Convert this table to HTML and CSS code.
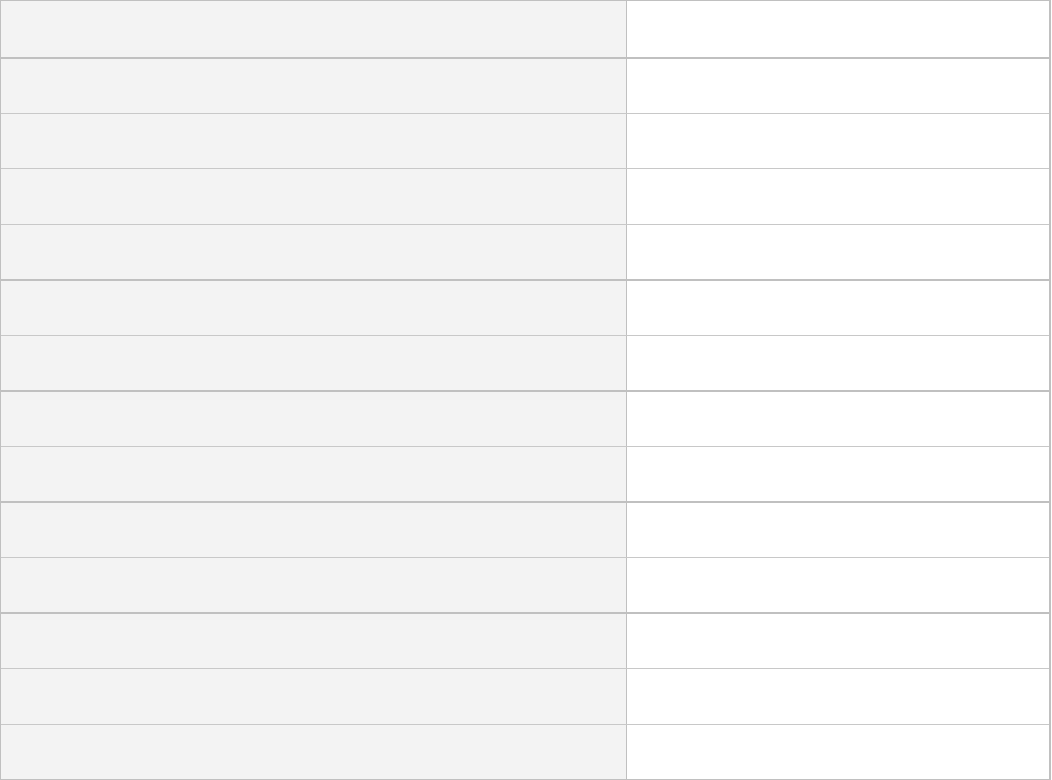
FILE: index.html
```html
<!DOCTYPE html>
<html lang="en">
<head>
<meta charset="utf-8">
<title>Table</title>
<link rel="stylesheet" href="styles.css">
</head>
<body>
<div class="sheet">
  <div class="row h58 thick"><div class="key"></div><div class="val"></div></div>
  <div class="row h55"><div class="key"></div><div class="val"></div></div>
  <div class="row h55"><div class="key"></div><div class="val"></div></div>
  <div class="row h56"><div class="key"></div><div class="val"></div></div>
  <div class="row h56 thick"><div class="key"></div><div class="val"></div></div>
  <div class="row h55"><div class="key"></div><div class="val"></div></div>
  <div class="row h56 thick"><div class="key"></div><div class="val"></div></div>
  <div class="row h55"><div class="key"></div><div class="val"></div></div>
  <div class="row h56 thick"><div class="key"></div><div class="val"></div></div>
  <div class="row h55"><div class="key"></div><div class="val"></div></div>
  <div class="row h56 thick"><div class="key"></div><div class="val"></div></div>
  <div class="row h55"><div class="key"></div><div class="val"></div></div>
  <div class="row h56"><div class="key"></div><div class="val"></div></div>
  <div class="row h54 last"><div class="key"></div><div class="val"></div></div>
</div>
</body>
</html>
```
FILE: styles.css
```css
html, body {
  margin: 0;
  padding: 0;
  background: #ffffff;
  font-family: "Liberation Sans", Arial, sans-serif;
}
.sheet {
  box-sizing: border-box;
  width: 1051px;
  height: 780px;
  border: 1px solid #c0c0c0;
  border-right-width: 2px;
  display: flex;
  flex-direction: column;
}
.row {
  box-sizing: border-box;
  display: flex;
  border-bottom: 1px solid #c8c8c8;
  flex: none;
}
.row.thick {
  border-bottom: 2px solid #c0c0c0;
}
.row.last {
  border-bottom: none;
}
.h54 { height: 54px; }
.h55 { height: 55px; }
.h56 { height: 56px; }
.h58 { height: 58px; }
.key {
  width: 625px;
  flex: none;
  background: #f3f3f3;
  border-right: 1px solid #c0c0c0;
}
.val {
  flex: 1;
  background: #ffffff;
}
```
